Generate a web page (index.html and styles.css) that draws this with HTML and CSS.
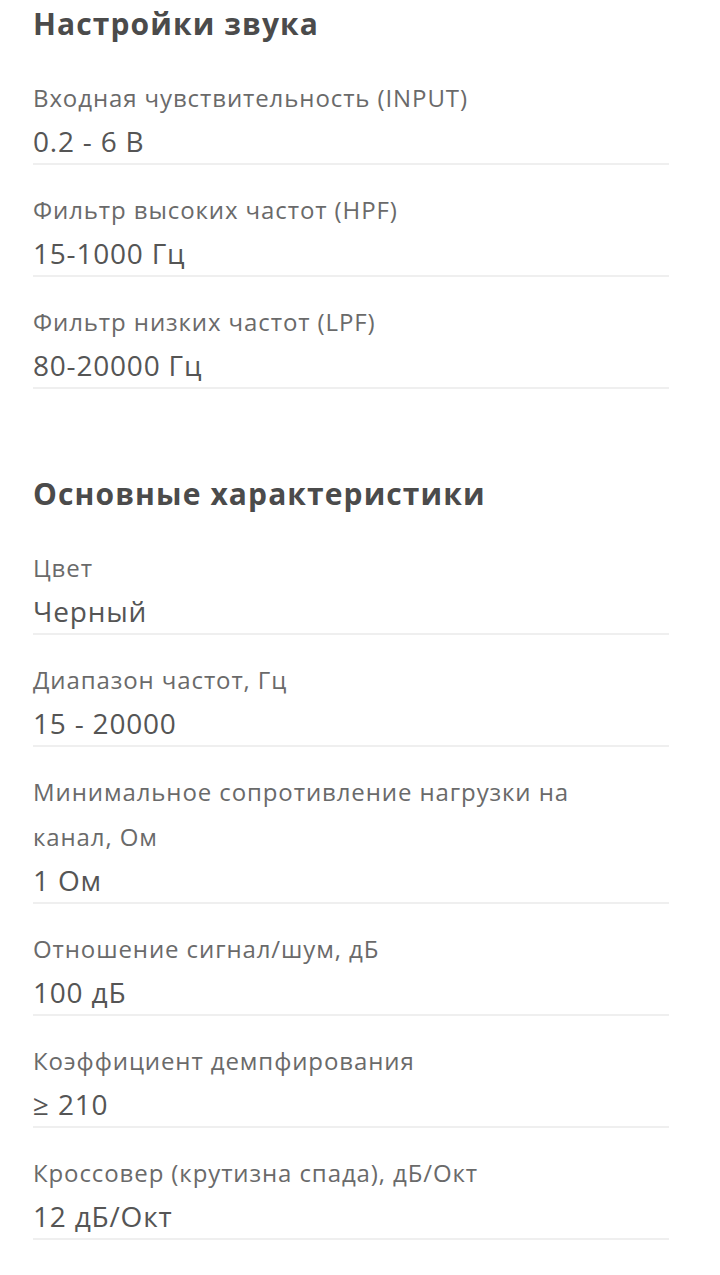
FILE: index.html
```html
<!DOCTYPE html>
<html lang="ru">
<head>
<meta charset="utf-8">
<title>Характеристики</title>
<link rel="stylesheet" href="styles.css">
</head>
<body>
<div class="page">
  <section class="group">
    <h2 class="group-title">Настройки звука</h2>
    <ul class="specs">
      <li class="spec"><div class="spec-label">Входная чувствительность (INPUT)</div><div class="spec-value">0.2 - 6 В</div></li>
      <li class="spec"><div class="spec-label">Фильтр высоких частот (HPF)</div><div class="spec-value">15-1000 Гц</div></li>
      <li class="spec"><div class="spec-label">Фильтр низких частот (LPF)</div><div class="spec-value">80-20000 Гц</div></li>
    </ul>
  </section>
  <section class="group group-second">
    <h2 class="group-title">Основные характеристики</h2>
    <ul class="specs">
      <li class="spec"><div class="spec-label">Цвет</div><div class="spec-value">Черный</div></li>
      <li class="spec"><div class="spec-label">Диапазон частот, Гц</div><div class="spec-value">15 - 20000</div></li>
      <li class="spec"><div class="spec-label">Минимальное сопротивление нагрузки на канал, Ом</div><div class="spec-value">1 Ом</div></li>
      <li class="spec"><div class="spec-label">Отношение сигнал/шум, дБ</div><div class="spec-value">100 дБ</div></li>
      <li class="spec"><div class="spec-label">Коэффициент демпфирования</div><div class="spec-value">≥ 210</div></li>
      <li class="spec"><div class="spec-label">Кроссовер (крутизна спада), дБ/Окт</div><div class="spec-value">12 дБ/Окт</div></li>
    </ul>
  </section>
</div>
</body>
</html>
```
FILE: styles.css
```css
html, body {
  margin: 0;
  padding: 0;
  background: #ffffff;
}
.page {
  font-family: "Open Sans", "Noto Sans", sans-serif;
  padding: 4px 51px 0 33px;
}
.group-title {
  margin: 0 0 9px 0;
  font-size: 30px;
  line-height: 40px;
  font-weight: 700;
  letter-spacing: 1.1px;
  color: #4b4b4b;
}
.group-second {
  padding-top: 85px;
}
.specs {
  list-style: none;
  margin: 0;
  padding: 0;
}
.spec {
  padding-top: 22px;
  border-bottom: 2px solid #efefef;
}
.spec-label {
  font-size: 24px;
  line-height: 45px;
  letter-spacing: 0.9px;
  color: #6a6a6a;
  max-width: 600px;
}
.spec-value {
  font-size: 28px;
  line-height: 43px;
  letter-spacing: 0.8px;
  color: #555555;
}
```
